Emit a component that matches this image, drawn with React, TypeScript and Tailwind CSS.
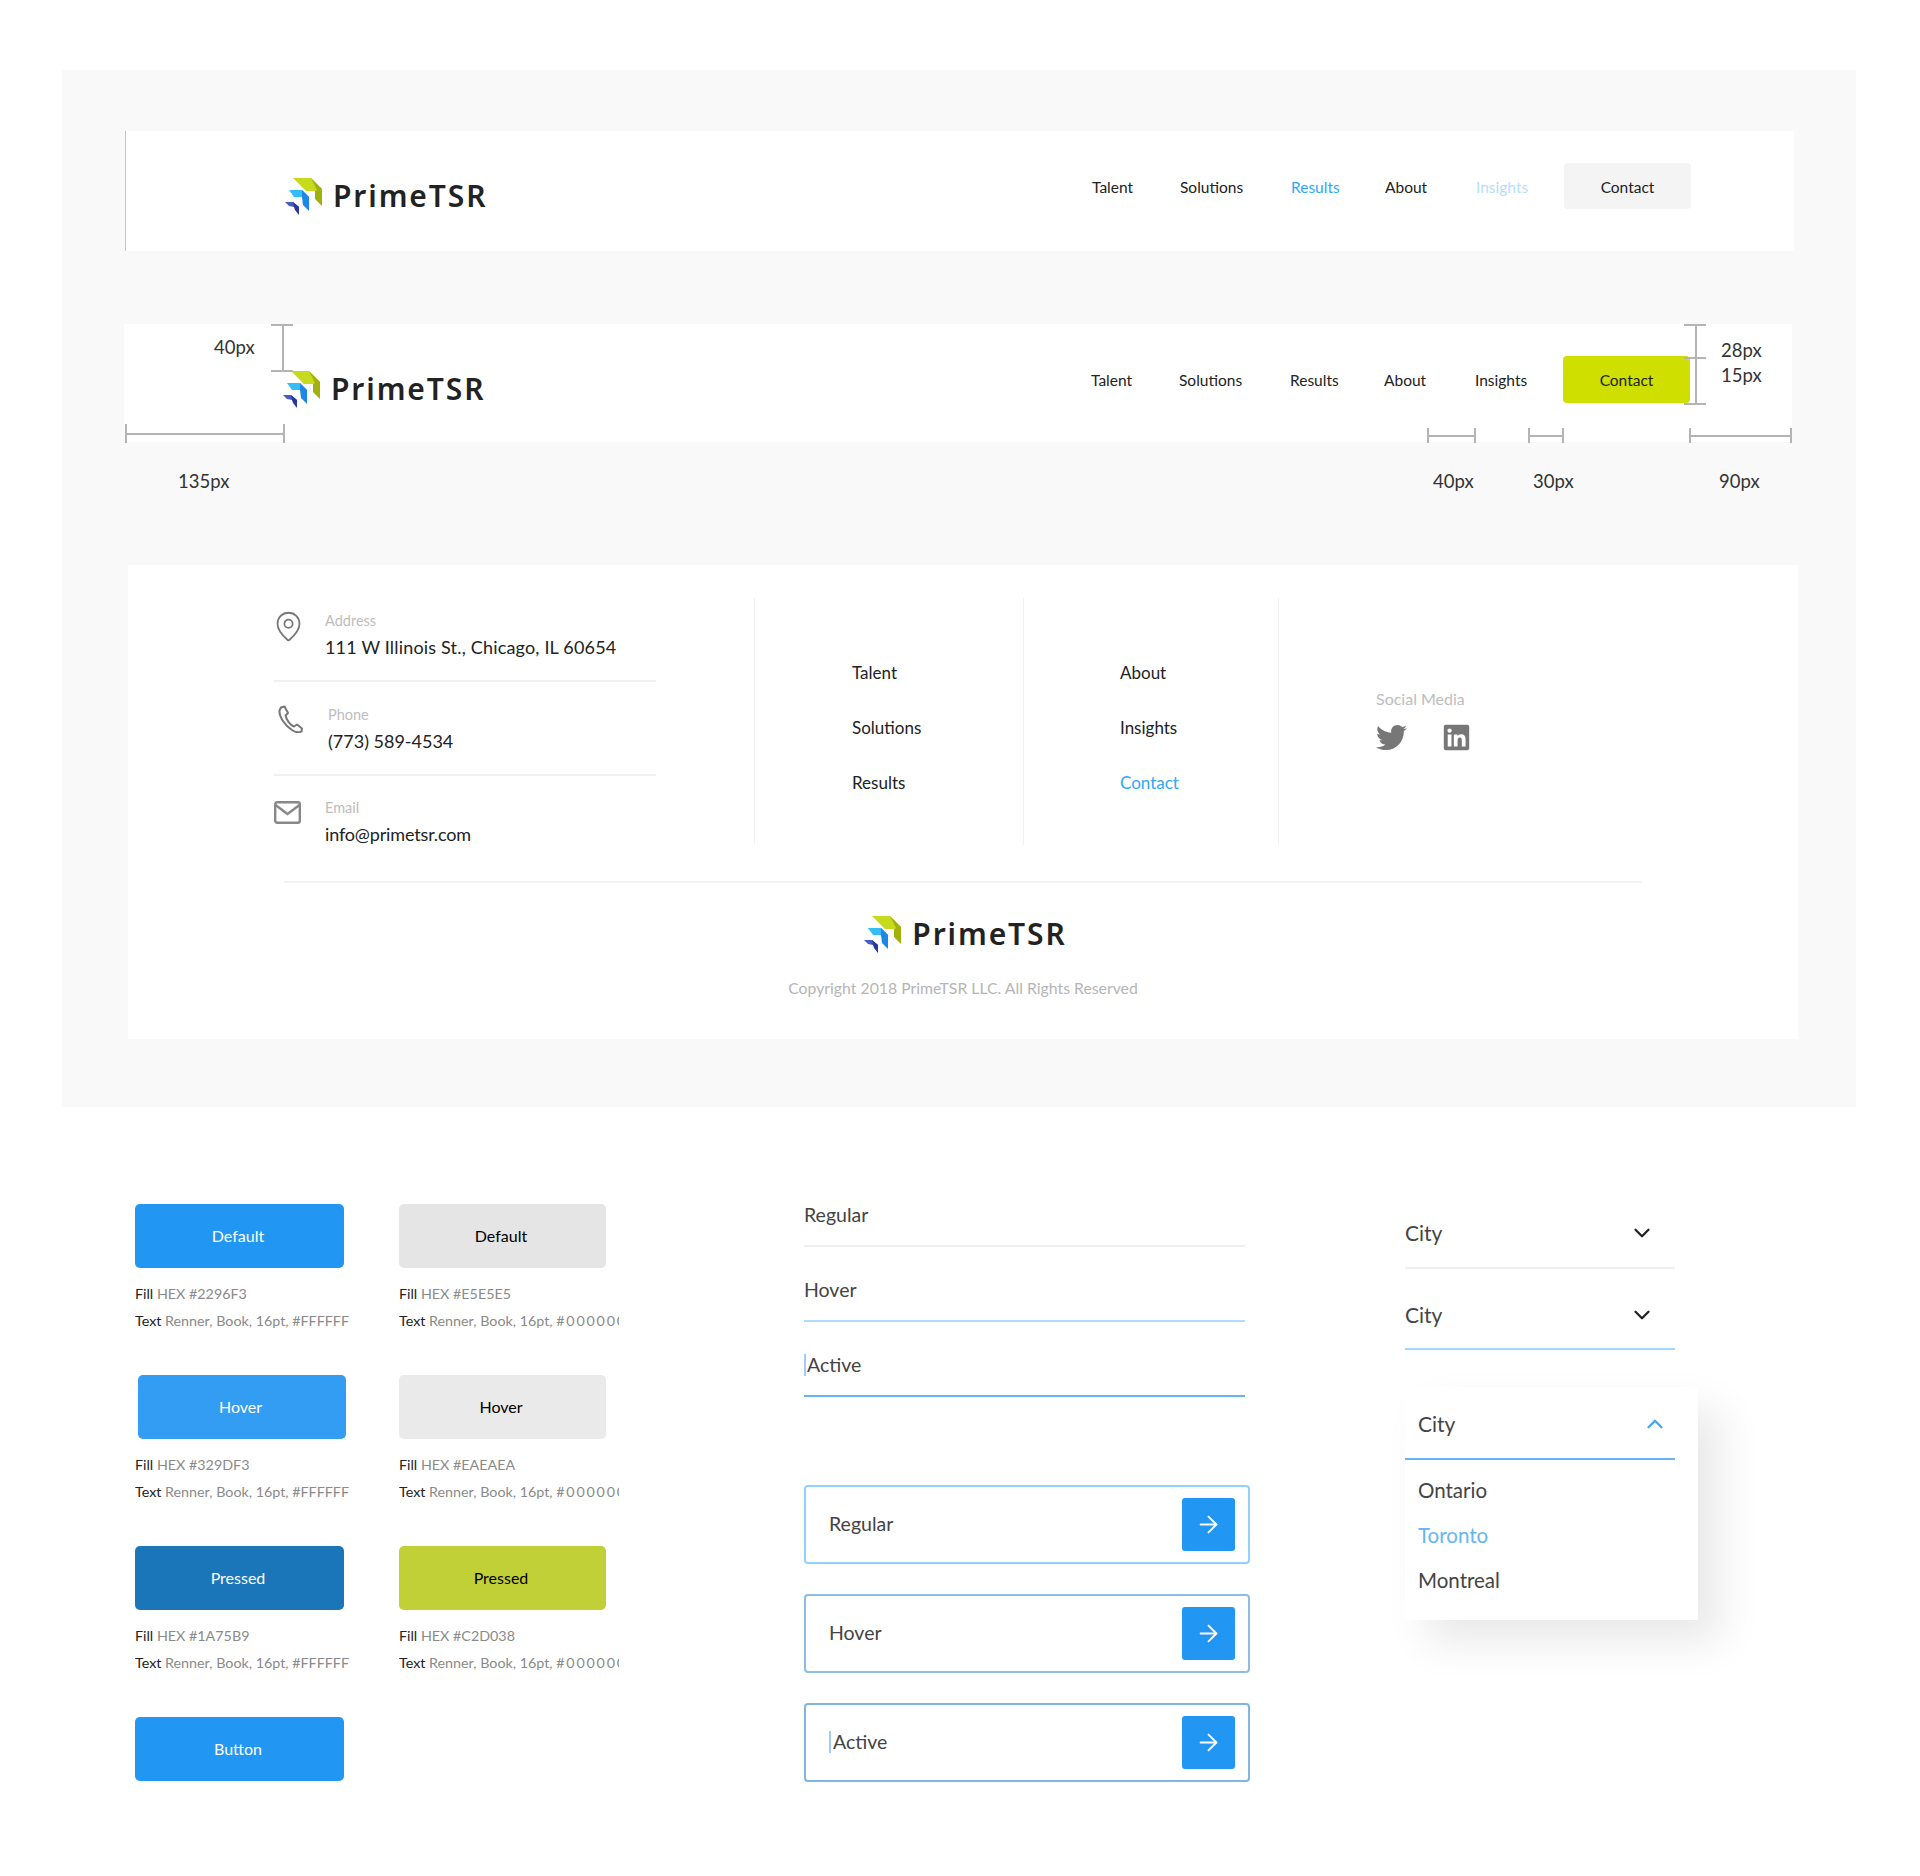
import { ArrowRight, ChevronDown, ChevronUp, MapPin } from "lucide-react";
import { FaLinkedin, FaTwitter } from "react-icons/fa";

const NAV_LINKS = [
  { label: "Talent", width: "w-[42px]" },
  { label: "Solutions", width: "w-[65px]" },
  { label: "Results", width: "w-[48px]" },
  { label: "About", width: "w-[45px]" },
  { label: "Insights", width: "w-[52px]" },
];

const SWATCHES = [
  [
    { label: "Default", fill: "#2296F3", text: "#FFFFFF", box: "w-[209px] bg-[#2296f3] text-white" },
    { label: "Hover", fill: "#329DF3", text: "#FFFFFF", box: "ml-[3px] w-[208px] bg-[#329df3] text-white" },
    { label: "Pressed", fill: "#1A75B9", text: "#FFFFFF", box: "w-[209px] bg-[#1a75b9] text-white" },
  ],
  [
    { label: "Default", fill: "#E5E5E5", text: "#000000", box: "w-[207px] bg-[#e5e5e5] text-black" },
    { label: "Hover", fill: "#EAEAEA", text: "#000000", box: "w-[207px] bg-[#eaeaea] text-black" },
    { label: "Pressed", fill: "#C2D038", text: "#000000", box: "w-[207px] bg-[#c2d038] text-black" },
  ],
];

// Redline marks over the gray panel
const RULES = [
  "left-[220px] top-[254px] h-[46px] w-[2px]",
  "left-[209px] top-[254px] h-[2px] w-[22px]",
  "left-[209px] top-[300px] h-[2px] w-[22px]",
  "left-[63px] top-[363px] h-[2px] w-[158px]",
  "left-[63px] top-[354px] h-[19px] w-[2px]",
  "left-[221px] top-[354px] h-[19px] w-[2px]",
  "left-[1633px] top-[254px] h-[79px] w-[2px]",
  "left-[1622px] top-[254px] h-[2px] w-[22px]",
  "left-[1622px] top-[287px] h-[2px] w-[22px]",
  "left-[1622px] top-[333px] h-[2px] w-[22px]",
  "left-[1365px] top-[365px] h-[2px] w-[48px]",
  "left-[1365px] top-[358px] h-[15px] w-[2px]",
  "left-[1412px] top-[358px] h-[15px] w-[2px]",
  "left-[1466px] top-[365px] h-[2px] w-[35px]",
  "left-[1466px] top-[358px] h-[15px] w-[2px]",
  "left-[1500px] top-[358px] h-[15px] w-[2px]",
  "left-[1627px] top-[365px] h-[2px] w-[102px]",
  "left-[1627px] top-[358px] h-[15px] w-[2px]",
  "left-[1728px] top-[358px] h-[15px] w-[2px]",
];

const RULE_LABELS = [
  { text: "40px", pos: "left-[152px] top-[267px]" },
  { text: "135px", pos: "left-[116px] top-[401px]" },
  { text: "28px", pos: "left-[1659px] top-[270px]" },
  { text: "15px", pos: "left-[1659px] top-[295px]" },
  { text: "40px", pos: "left-[1371px] top-[401px]" },
  { text: "30px", pos: "left-[1471px] top-[401px]" },
  { text: "90px", pos: "left-[1657px] top-[401px]" },
];

function Logo() {
  return (
    <div className="flex items-center gap-[11px]">
      <svg width="38" height="38" viewBox="0 0 38 38">
        <polygon points="9,1 27,1 38,12 31,14 22,14" fill="#c6da1e" />
        <polygon points="27,1 38,12 38,29 31,22 31,14 33,13" fill="#a2b00e" />
        <polygon points="5,13 18,13 25,20 18,20 10,20" fill="#35bdf8" />
        <polygon points="18,13 25,20 25,34 19,28 18,20" fill="#1e88e5" />
        <polygon points="1,25 9,25 15,30 10,30 5,29" fill="#4a5cc4" />
        <polygon points="9,25 15,30 15,38 11,33 10,30" fill="#27379c" />
      </svg>
      <span className="whitespace-nowrap font-['Noto_Sans',sans-serif] text-[30px] font-semibold leading-[38px] tracking-[1.9px] text-[#222]">
        PrimeTSR
      </span>
    </div>
  );
}

function NavBar({ activeColors, contact, className }: { activeColors: boolean; contact: string; className: string }) {
  return (
    <div className={`flex items-start justify-between bg-white pl-[158px] ${className}`}>
      <div className="mt-[46px]">
        <Logo />
      </div>
      <div className="mt-[32px] flex items-start">
        <div className="flex h-[46px] items-center gap-[46px] pt-[3px] text-[15.5px] text-[#222]">
          {NAV_LINKS.map((link) => (
            <span
              key={link.label}
              className={`whitespace-nowrap ${link.width} ${
                activeColors && link.label === "Results"
                  ? "text-[#2fa8f6]"
                  : activeColors && link.label === "Insights"
                    ? "text-[#b5defb]"
                    : ""
              }`}
            >
              {link.label}
            </span>
          ))}
        </div>
        <div className={`ml-[36px] flex w-[127px] items-center justify-center rounded-[4px] pt-[3px] text-[15.5px] text-[#222] ${contact}`}>
          Contact
        </div>
      </div>
    </div>
  );
}

function ContactRow({
  icon,
  label,
  value,
  rowClass,
  textClass,
  valueClass,
}: {
  icon: React.ReactNode;
  label: string;
  value: string;
  rowClass: string;
  textClass: string;
  valueClass?: string;
}) {
  return (
    <div className={`flex items-start ${rowClass}`}>
      {icon}
      <div className={textClass}>
        <div className="h-[20px] text-[14.5px] leading-[20px] text-[#bdbdbd]">{label}</div>
        <div className={`mt-[4px] h-[24px] whitespace-nowrap text-[18px] leading-[24px] text-[#222] ${valueClass ?? ""}`}>{value}</div>
      </div>
    </div>
  );
}

function Footer() {
  return (
    <div className="ml-[66px] mt-[123px] h-[474px] w-[1670px] bg-white pt-[33px]">
      <div className="flex h-[247px]">
        <div className="ml-[146px] w-[382px] shrink-0">
          <ContactRow
            rowClass="h-[84px] border-b-2 border-[#f1f1f1] pt-[12px]"
            textClass="ml-[20px] pt-[1px]"
            valueClass="tracking-[0.18px]"
            label="Address"
            value="111 W Illinois St., Chicago, IL 60654"
            icon={<MapPin size={33} strokeWidth={1.3} className="-ml-[2px] shrink-0 text-[#777]" />}
          />
          <ContactRow
            rowClass="h-[94px] border-b-2 border-[#f1f1f1] pt-[23px]"
            textClass="ml-[24px]"
            label="Phone"
            value="(773) 589-4534"
            icon={
              <svg width="26" height="28" viewBox="0 0 26 28" fill="none" stroke="#777" strokeWidth="2" className="ml-[4px] shrink-0">
                <path d="M3 2.5 6.5 1.5 10 8 7.5 10.5C8.5 15 12 20 16 21.5L19 19.5 24 23.5 23.5 26.5C21 28 17 27 14 25 7 20.5 1 12 1.5 5.5Z" strokeLinejoin="round" />
              </svg>
            }
          />
          <ContactRow
            rowClass="h-[69px] pt-[22px]"
            textClass="ml-[24px]"
            valueClass="tracking-[-0.15px]"
            label="Email"
            value="info@primetsr.com"
            icon={
              <svg width="27" height="23" viewBox="0 0 27 23" fill="none" stroke="#888" strokeWidth="2.4" className="mt-[3px] shrink-0">
                <rect x="1.2" y="1.2" width="24.6" height="20.6" rx="2" />
                <path d="M1.5 4 13.5 13 25.5 4" />
              </svg>
            }
          />
        </div>
        <div className="ml-[98px] flex w-[269px] shrink-0 flex-col gap-[31px] border-l border-[#f1f1f1] pl-[97px] pt-[63px] text-[17px] leading-[24px] text-[#222]">
          <span>Talent</span>
          <span>Solutions</span>
          <span>Results</span>
        </div>
        <div className="flex w-[255px] shrink-0 flex-col gap-[31px] border-l border-[#f1f1f1] pl-[96px] pt-[63px] text-[17px] leading-[24px] text-[#222]">
          <span>About</span>
          <span>Insights</span>
          <span className="text-[#2fa8f6]">Contact</span>
        </div>
        <div className="border-l border-[#f1f1f1] pl-[97px] pt-[91px]">
          <div className="h-[20px] text-[16px] leading-[20px] text-[#bdbdbd]">Social Media</div>
          <div className="mt-[13px] flex items-center gap-[35px] text-[#777]">
            <FaTwitter size={31} />
            <FaLinkedin size={29} />
          </div>
        </div>
      </div>
      <div className="ml-[156px] mt-[36px] h-[2px] w-[1358px] bg-[#f3f3f3]" />
      <div className="mt-[32px] flex justify-center pl-[4px]">
        <Logo />
      </div>
      <div className="mt-[25px] h-[20px] text-center text-[15.8px] leading-[20px] text-[#b5b5b5]">
        Copyright 2018 PrimeTSR LLC. All Rights Reserved
      </div>
    </div>
  );
}

function Swatch({ item }: { item: (typeof SWATCHES)[number][number] }) {
  return (
    <div className="h-[171px]">
      <div className={`flex h-[64px] items-center justify-center rounded-[5px] pr-[3px] text-[16px] ${item.box}`}>
        {item.label}
      </div>
      <div className="mt-[16px] h-[20px] w-[220px] overflow-hidden whitespace-nowrap text-[14.3px] leading-[20px] text-[#8a8a8a]">
        <span className="text-[#222]">Fill</span> HEX #{item.fill.slice(1)}
      </div>
      <div className="mt-[7px] h-[20px] w-[220px] overflow-hidden whitespace-nowrap text-[14.3px] leading-[20px] text-[#8a8a8a]">
        <span className="text-[#222]">Text</span> Renner, Book, 16pt,{" "}
        <span className={item.text === "#000000" ? "tracking-[1.8px]" : ""}>{item.text}</span>
      </div>
    </div>
  );
}

function ArrowBox({ label, border, caret }: { label: string; border: string; caret?: boolean }) {
  return (
    <div className={`flex h-[79px] w-[446px] items-center justify-between rounded-[4px] border-2 pl-[23px] pr-[13px] ${border}`}>
      <span className="flex items-center pb-[2px] text-[19.5px] text-[#444]">
        {caret && <span className="mr-[2px] h-[22px] w-[2px] bg-[#9fcdf3]" />}
        {label}
      </span>
      <div className="flex h-[53px] w-[53px] items-center justify-center rounded-[3px] bg-[#2296f3] text-white">
        <ArrowRight size={27} strokeWidth={1.7} />
      </div>
    </div>
  );
}

export default function App() {
  return (
    <div className="h-[1876px] w-[1920px] overflow-hidden bg-white pt-[70px] font-['Lato',sans-serif]">
      {/* gray presentation panel */}
      <div className="relative ml-[62px] h-[1037px] w-[1794px] overflow-hidden bg-[#f9f9f9] pt-[61px]">
        <NavBar
          activeColors
          contact="h-[46px] bg-[#f4f4f4]"
          className="ml-[63px] h-[120px] w-[1669px] border-l border-[#c4c4c4] pr-[103px]"
        />
        <NavBar
          activeColors={false}
          contact="h-[47px] bg-[#cfdf00]"
          className="ml-[62px] mt-[73px] h-[118px] w-[1668px] pr-[102px]"
        />
        <Footer />

        {RULES.map((rule) => (
          <div key={rule} className={`absolute bg-[#b4b4b4] ${rule}`} />
        ))}
        {RULE_LABELS.map((item) => (
          <div key={item.pos} className={`absolute h-[20px] text-[18.5px] leading-[20px] text-[#333] ${item.pos}`}>
            {item.text}
          </div>
        ))}
      </div>

      {/* component states */}
      <div className="ml-[135px] mt-[93px] flex items-start">
        <div className="flex w-[484px] shrink-0 pt-[4px]">
          {SWATCHES.map((col, i) => (
            <div key={i} className="w-[264px] shrink-0">
              {col.map((item) => (
                <Swatch key={item.fill} item={item} />
              ))}
              {i === 0 && (
                <div className="flex h-[64px] w-[209px] items-center justify-center rounded-[5px] bg-[#2296f3] pr-[3px] text-[16px] text-white">
                  Button
                </div>
              )}
            </div>
          ))}
        </div>

        <div className="ml-[185px] w-[446px] shrink-0">
          <div className="flex w-[441px] flex-col gap-[28px] text-[19.5px] leading-[30px] text-[#444]">
            <div className="h-[47px] border-b-2 border-[#f0f0f0]">Regular</div>
            <div className="h-[47px] border-b-2 border-[#b3dcfb]">Hover</div>
            <div className="flex h-[47px] items-start border-b-2 border-[#64b5f6]">
              <span className="mr-[1px] mt-[4px] h-[22px] w-[2px] bg-[#9fcdf3]" />
              Active
            </div>
          </div>
          <div className="mt-[88px] flex flex-col gap-[30px]">
            <ArrowBox label="Regular" border="border-[#90d2fb]" />
            <ArrowBox label="Hover" border="border-[#8dbde3]" />
            <ArrowBox label="Active" border="border-[#80b6e4]" caret />
          </div>
        </div>

        <div className="ml-[155px] w-[293px] shrink-0 pt-[19px] text-[21px] leading-[28px] text-[#444]">
          <div className="flex h-[50px] w-[270px] items-start justify-between border-b-2 border-[#eeeeee] pr-[20px]">
            City
            <ChevronDown size={26} strokeWidth={2.1} className="mt-[1px] text-[#222]" />
          </div>
          <div className="mt-[32px] flex h-[49px] w-[270px] items-start justify-between border-b-2 border-[#a6d8fc] pr-[20px]">
            City
            <ChevronDown size={26} strokeWidth={2.1} className="mt-[1px] text-[#222]" />
          </div>
          <div className="mt-[37px] h-[233px] bg-white pt-[23px] shadow-[22px_22px_40px_rgba(0,0,0,0.09)]">
            <div className="flex h-[50px] w-[270px] items-start justify-between border-b-2 border-[#64b5f6] pl-[13px] pr-[7px]">
              City
              <ChevronUp size={26} strokeWidth={2.1} className="mt-[1px] text-[#42a5f5]" />
            </div>
            <div className="mt-[16px] flex flex-col gap-[17px] pl-[13px] text-[20.5px]">
              <span>Ontario</span>
              <span className="text-[#64b5f6]">Toronto</span>
              <span>Montreal</span>
            </div>
          </div>
        </div>
      </div>
    </div>
  );
}
